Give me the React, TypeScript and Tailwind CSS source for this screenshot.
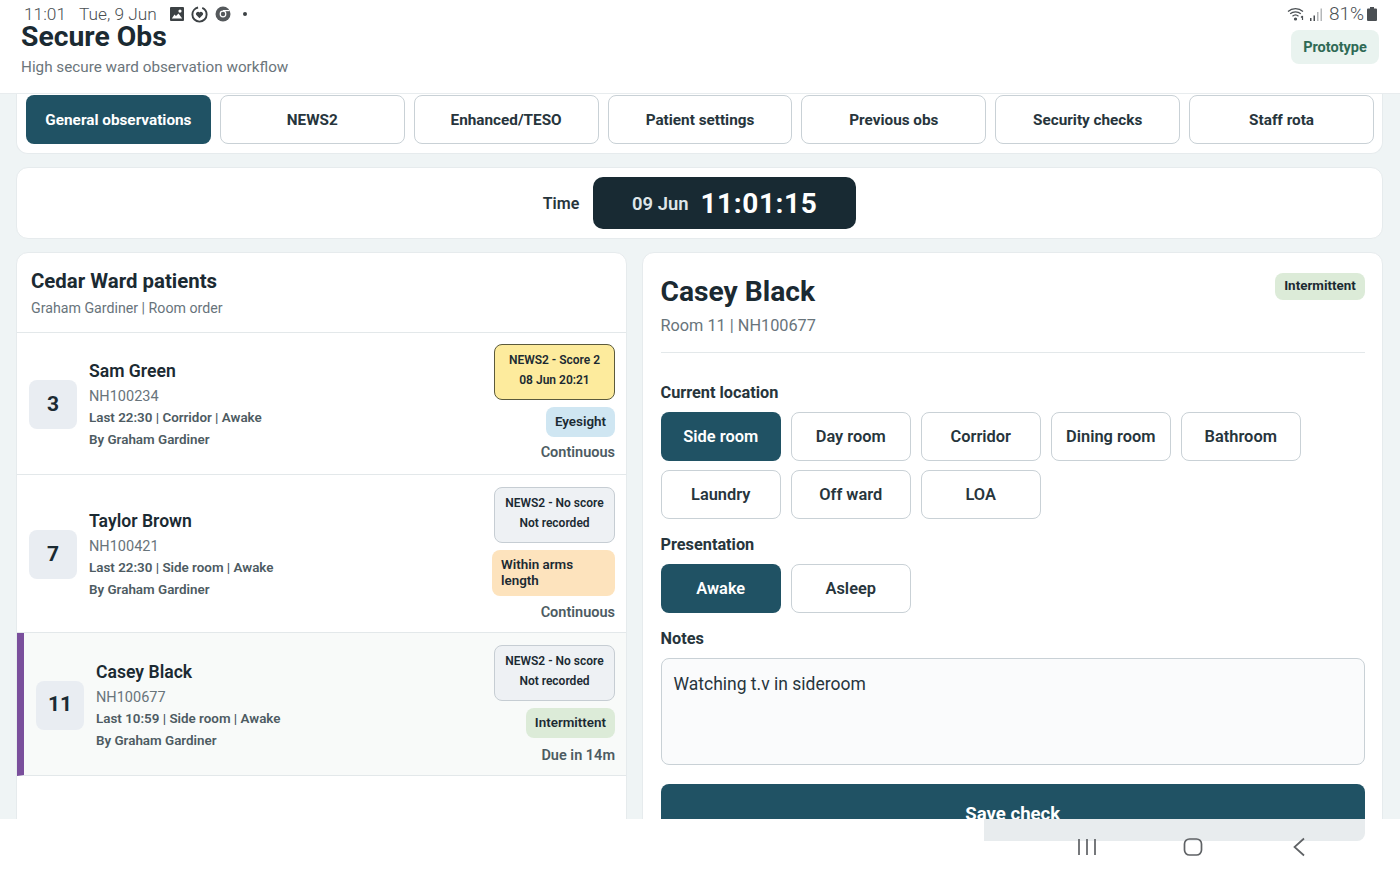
import React from "react";

const tabs = ["General observations", "NEWS2", "Enhanced/TESO", "Patient settings", "Previous obs", "Security checks", "Staff rota"];

function Choice({ label, active }: { label: string; active?: boolean }) {
  return (
    <div className={active
      ? "w-[120.500px] h-[49px] pt-[2px] flex items-center justify-center rounded-lg bg-[#205264] text-white text-[16.400px] font-semibold"
      : "w-[120.500px] h-[49px] pt-[2px] flex items-center justify-center rounded-lg bg-white border border-[#c9d1d6] text-[#27353c] text-[16.400px] font-semibold"}>
      {label}
    </div>
  );
}

type Row = {
  room: string; name: string; id: string; last: string;
  news: string; newsSub: string; newsYellow?: boolean;
  level: string; levelClass: string; foot: string; footClass: string; blockClass: string; selected?: boolean; h: string;
};

const rows: Row[] = [
  { room: "3", name: "Sam Green", id: "NH100234", last: "Last 22:30 | Corridor | Awake", news: "NEWS2 - Score 2", newsSub: "08 Jun 20:21", newsYellow: true, level: "Eyesight", levelClass: "bg-[#cfe6f2] px-[9px] py-[5px] leading-[20px]", foot: "Continuous", footClass: "mt-[5px]", blockClass: "", h: "h-[142px]" },
  { room: "7", name: "Taylor Brown", id: "NH100421", last: "Last 22:30 | Side room | Awake", news: "NEWS2 - No score", newsSub: "Not recorded", level: "Within arms length", levelClass: "bg-[#fde3bd] w-[123px] px-[9px] py-[7px] leading-[16px]", foot: "Continuous", footClass: "mt-[6px]", blockClass: "mt-[3px]", h: "h-[158px]" },
  { room: "11", name: "Casey Black", id: "NH100677", last: "Last 10:59 | Side room | Awake", news: "NEWS2 - No score", newsSub: "Not recorded", level: "Intermittent", levelClass: "bg-[#dcebd8] px-[9px] py-[5px] leading-[20px]", foot: "Due in 14m", footClass: "mt-[7px]", blockClass: "mt-[4px]", selected: true, h: "h-[143px]" },
];

function PatientRow({ r }: { r: Row }) {
  return (
    <div className={`${r.h} flex items-center justify-between border-b border-[#e3e8ea] pr-[11px] ${r.selected ? "bg-[#f8faf9] border-l-[7px] border-l-[#7a4f9c] pl-3" : "pl-3"}`}>
      <div className="flex items-center gap-3 mt-[2px]">
        <div className="w-[48px] h-[49px] rounded-lg bg-[#e9edf2] flex items-center justify-center text-[21px] font-bold text-[#1b2a32]">{r.room}</div>
        <div className="flex flex-col mt-[1px]">
          <div className="text-[17.600px] leading-[24px] font-semibold text-[#1b2a32]">{r.name}</div>
          <div className="text-[14.500px] leading-[21px] mt-[3px] text-[#68747b]">{r.id}</div>
          <div className="text-[13.400px] leading-[22px] font-semibold text-[#4d5b62]">{r.last}</div>
          <div className="text-[13.400px] leading-[22px] font-semibold text-[#4d5b62]">By Graham Gardiner</div>
        </div>
      </div>
      <div className={`flex flex-col items-end ${r.blockClass}`}>
        <div className={`w-[121px] h-[56px] pb-[4px] rounded-lg border flex flex-col items-center justify-center text-[12px] leading-[20px] font-semibold text-[#1b2a32] ${r.newsYellow ? "bg-[#fdeb9d] border-[#5b5a3c]" : "bg-[#eef1f4] border-[#c6cdd3]"}`}>
          <div>{r.news}</div>
          <div>{r.newsSub}</div>
        </div>
        <div className={`mt-[7px] rounded-lg text-[13.400px] font-semibold text-[#1b2a32] ${r.levelClass}`}>{r.level}</div>
        <div className={`${r.footClass} text-[14.500px] leading-[22px] font-semibold text-[#4d5b62]`}>{r.foot}</div>
      </div>
    </div>
  );
}

export default function App() {
  return (
    <div className="relative w-[1400px] h-[875px] overflow-hidden bg-[#eff4f5] font-['Roboto',sans-serif]">
      {/* Device status bar */}
      <div className="absolute left-[24px] right-[23px] top-[4px] h-[20px] flex items-center justify-between text-[17.300px] leading-[20px] text-[#4a4f53] font-light z-10">
        <div className="flex items-center">
          <span>11:01</span>
          <span className="ml-[13px]">Tue, 9 Jun</span>
          <svg className="ml-[12px]" width="16" height="16" viewBox="0 0 16 16"><path fill="#3c4144" fillRule="evenodd" d="M2 1h12a1 1 0 0 1 1 1v12a1 1 0 0 1-1 1H2a1 1 0 0 1-1-1V2a1 1 0 0 1 1-1Zm.800 11.500h10.400L9.500 7.500 7 10 5.500 8.500Zm8.200-9a1.600 1.600 0 1 0 0 3.200 1.600 1.600 0 0 0 0-3.200Z" /></svg>
          <svg className="ml-[6px]" width="17" height="17" viewBox="0 0 16 16"><circle cx="8" cy="8" r="6.700" fill="none" stroke="#3c4144" strokeWidth="1.800" strokeDasharray="30 4" /><path fill="#3c4144" d="M8 11.500 4.800 8.300a2 2 0 0 1 3.200-2.300 2 2 0 0 1 3.200 2.300Z" /></svg>
          <svg className="ml-[7px]" width="16" height="16" viewBox="0 0 16 16"><circle cx="8" cy="8" r="7.500" fill="#55595c" /><circle cx="8" cy="8" r="3.400" fill="#fff" /><circle cx="8" cy="8" r="2.200" fill="#55595c" /><path d="M8 4.600h6.500" stroke="#fff" strokeWidth="1.200" /></svg>
          <span className="ml-[12px] w-[4px] h-[4px] rounded-full bg-[#3c4144]" />
        </div>
        <div className="flex items-center">
          <svg width="19" height="16" viewBox="0 0 19 16" fill="none" stroke="#4a4f53" strokeWidth="1.200"><path d="M1 5.500a11 11 0 0 1 15 0" /><path d="M3.200 7.800a8 8 0 0 1 10.600 0" /><path d="M5.500 10.200a4.500 4.500 0 0 1 6 0" /><circle cx="8.500" cy="13" r="1" fill="#4a4f53" /><path d="M15.500 14V10M14 11.500l1.500-1.500" /></svg>
          <svg className="ml-[3px]" width="15" height="15" viewBox="0 0 15 15"><rect x="1" y="11" width="1.500" height="3" fill="#4a4f53" /><rect x="4.500" y="8.500" width="1.500" height="5.500" fill="#4a4f53" /><rect x="8" y="5" width="1.500" height="9" fill="#b5b8ba" /><rect x="11.500" y="1.500" width="1.500" height="12.500" fill="#b5b8ba" /></svg>
          <span className="ml-[5px] text-[19px]">81%</span>
          <svg className="ml-[3px]" width="10" height="14" viewBox="0 0 10 14"><path fill="#4a4f53" d="M3 0h4v1.500h2a1 1 0 0 1 1 1V13a1 1 0 0 1-1 1H1a1 1 0 0 1-1-1V2.500a1 1 0 0 1 1-1h2Z" /></svg>
        </div>
      </div>

      {/* App header */}
      <header className="h-[94px] bg-white border-b border-[#e8ecee] pl-[21px] pr-[21px] pt-[24px] flex justify-between items-start">
        <div>
          <h1 className="text-[28.300px] leading-[26px] font-bold text-[#1b2a32]">Secure Obs</h1>
          <p className="mt-[6px] text-[15.250px] leading-[22px] text-[#6b757b]">High secure ward observation workflow</p>
        </div>
        <div className="mt-[6px] w-[88px] h-[34px] pt-[2px] rounded-lg bg-[#e9f3ef] flex items-center justify-center text-[14.500px] font-bold text-[#2f6a55]">Prototype</div>
      </header>

      <main className="pl-[16px] pr-[17px]">
        {/* Tabs */}
        <nav className="h-[60px] bg-white rounded-b-xl border border-t-0 border-[#e6ebed] pl-[9px] pr-[8px] pt-[1px] grid grid-cols-7 gap-[9px]">
          {tabs.map((t, i) => (
            <div key={t} className={i === 0
              ? "h-[49px] pt-[2px] rounded-lg bg-[#205264] text-white flex items-center justify-center text-[15.300px] font-bold"
              : "h-[49px] pt-[2px] rounded-lg bg-white border border-[#c9d1d6] text-[#27353c] flex items-center justify-center text-[15.300px] font-bold"}>{t}</div>
          ))}
        </nav>

        {/* Time */}
        <section className="mt-[13px] h-[72px] bg-white rounded-xl border border-[#e6ebed] flex items-center justify-center gap-[14px]">
          <span className="mt-[2px] text-[16px] font-semibold text-[#27353c]">Time</span>
          <div className="w-[263px] h-[52px] pt-[2px] rounded-[10px] bg-[#182a33] flex items-center justify-center gap-[12px] text-white">
            <span className="text-[18.400px] font-semibold text-[#dfe6e9]">09 Jun</span>
            <span className="text-[28px] font-bold tracking-[0.600px]">11:01:15</span>
          </div>
        </section>

        <div className="mt-[13px] grid grid-cols-[611px_741px] gap-[15px]">
          {/* Patient list */}
          <section className="h-[640px] bg-white rounded-xl border border-[#e6ebed]">
            <div className="h-[80px] border-b border-[#e3e8ea] pl-[14px] pt-[14px]">
              <h2 className="text-[20.400px] leading-[28px] font-bold text-[#1b2a32]">Cedar Ward patients</h2>
              <p className="mt-[3px] text-[14.200px] leading-[20px] text-[#68747b]">Graham Gardiner | Room order</p>
            </div>
            {rows.map((r) => <PatientRow key={r.room} r={r} />)}
          </section>

          {/* Detail */}
          <section className="h-[640px] bg-white rounded-xl border border-[#e6ebed] pl-[17.500px] pr-[17px] pt-[19px]">
            <div className="h-[81px] border-b border-[#e3e8ea] flex justify-between items-start">
              <div className="mt-[1px]">
                <h2 className="text-[28.200px] leading-[38px] font-bold text-[#1b2a32]">Casey Black</h2>
                <p className="mt-[3px] text-[16.300px] leading-[24px] text-[#68747b]">Room 11 | NH100677</p>
              </div>
              <div className="h-[27px] w-[90px] mt-[1px] rounded-lg bg-[#dcebd8] flex items-center justify-center text-[13.400px] font-bold text-[#1b2a32]">Intermittent</div>
            </div>
            <div className="mt-[29px] text-[16.300px] leading-[22px] font-bold text-[#27353c]">Current location</div>
            <div className="mt-[8px] flex flex-wrap gap-x-[9.500px] gap-y-[9px] w-[660px]">
              <Choice label="Side room" active />
              <Choice label="Day room" />
              <Choice label="Corridor" />
              <Choice label="Dining room" />
              <Choice label="Bathroom" />
              <Choice label="Laundry" />
              <Choice label="Off ward" />
              <Choice label="LOA" />
            </div>
            <div className="mt-[15px] text-[16.300px] leading-[22px] font-bold text-[#27353c]">Presentation</div>
            <div className="mt-[8px] flex gap-[9.500px]">
              <Choice label="Awake" active />
              <Choice label="Asleep" />
            </div>
            <div className="mt-[15px] text-[16.300px] leading-[22px] font-bold text-[#27353c]">Notes</div>
            <div className="mt-[8px] h-[107px] rounded-lg border border-[#c9d1d6] bg-[#fafbfc] px-3 py-[12px] text-[17.500px] leading-[26px] text-[#27353c]">Watching t.v in sideroom</div>
            <div className="mt-[19px] h-[58px] pt-[4px] rounded-lg bg-[#205264] flex items-center justify-center text-[18.600px] font-bold text-white">Save check</div>
          </section>
        </div>
      </main>

      {/* Device navigation bar */}
      <div className="absolute left-0 right-0 bottom-0 h-[56px] bg-white">
        <div className="absolute left-[984px] top-0 w-[381px] h-[22px] bg-[#e8ecee] rounded-br-lg" />
        <svg className="absolute left-[1077px] top-[18px]" width="20" height="20" viewBox="0 0 20 20" fill="none" stroke="#5f6265" strokeWidth="1.700"><path d="M2 2v16M10 2v16M18 2v16" /></svg>
        <svg className="absolute left-[1183px] top-[18px]" width="20" height="20" viewBox="0 0 20 20" fill="none" stroke="#5f6265" strokeWidth="1.700"><rect x="1.500" y="2" width="17" height="16" rx="5" /></svg>
        <svg className="absolute left-[1292px] top-[18px]" width="14" height="20" viewBox="0 0 14 20" fill="none" stroke="#5f6265" strokeWidth="1.700"><path d="M12 1.500 2.500 10l9.500 8.500" /></svg>
      </div>
    </div>
  );
}
